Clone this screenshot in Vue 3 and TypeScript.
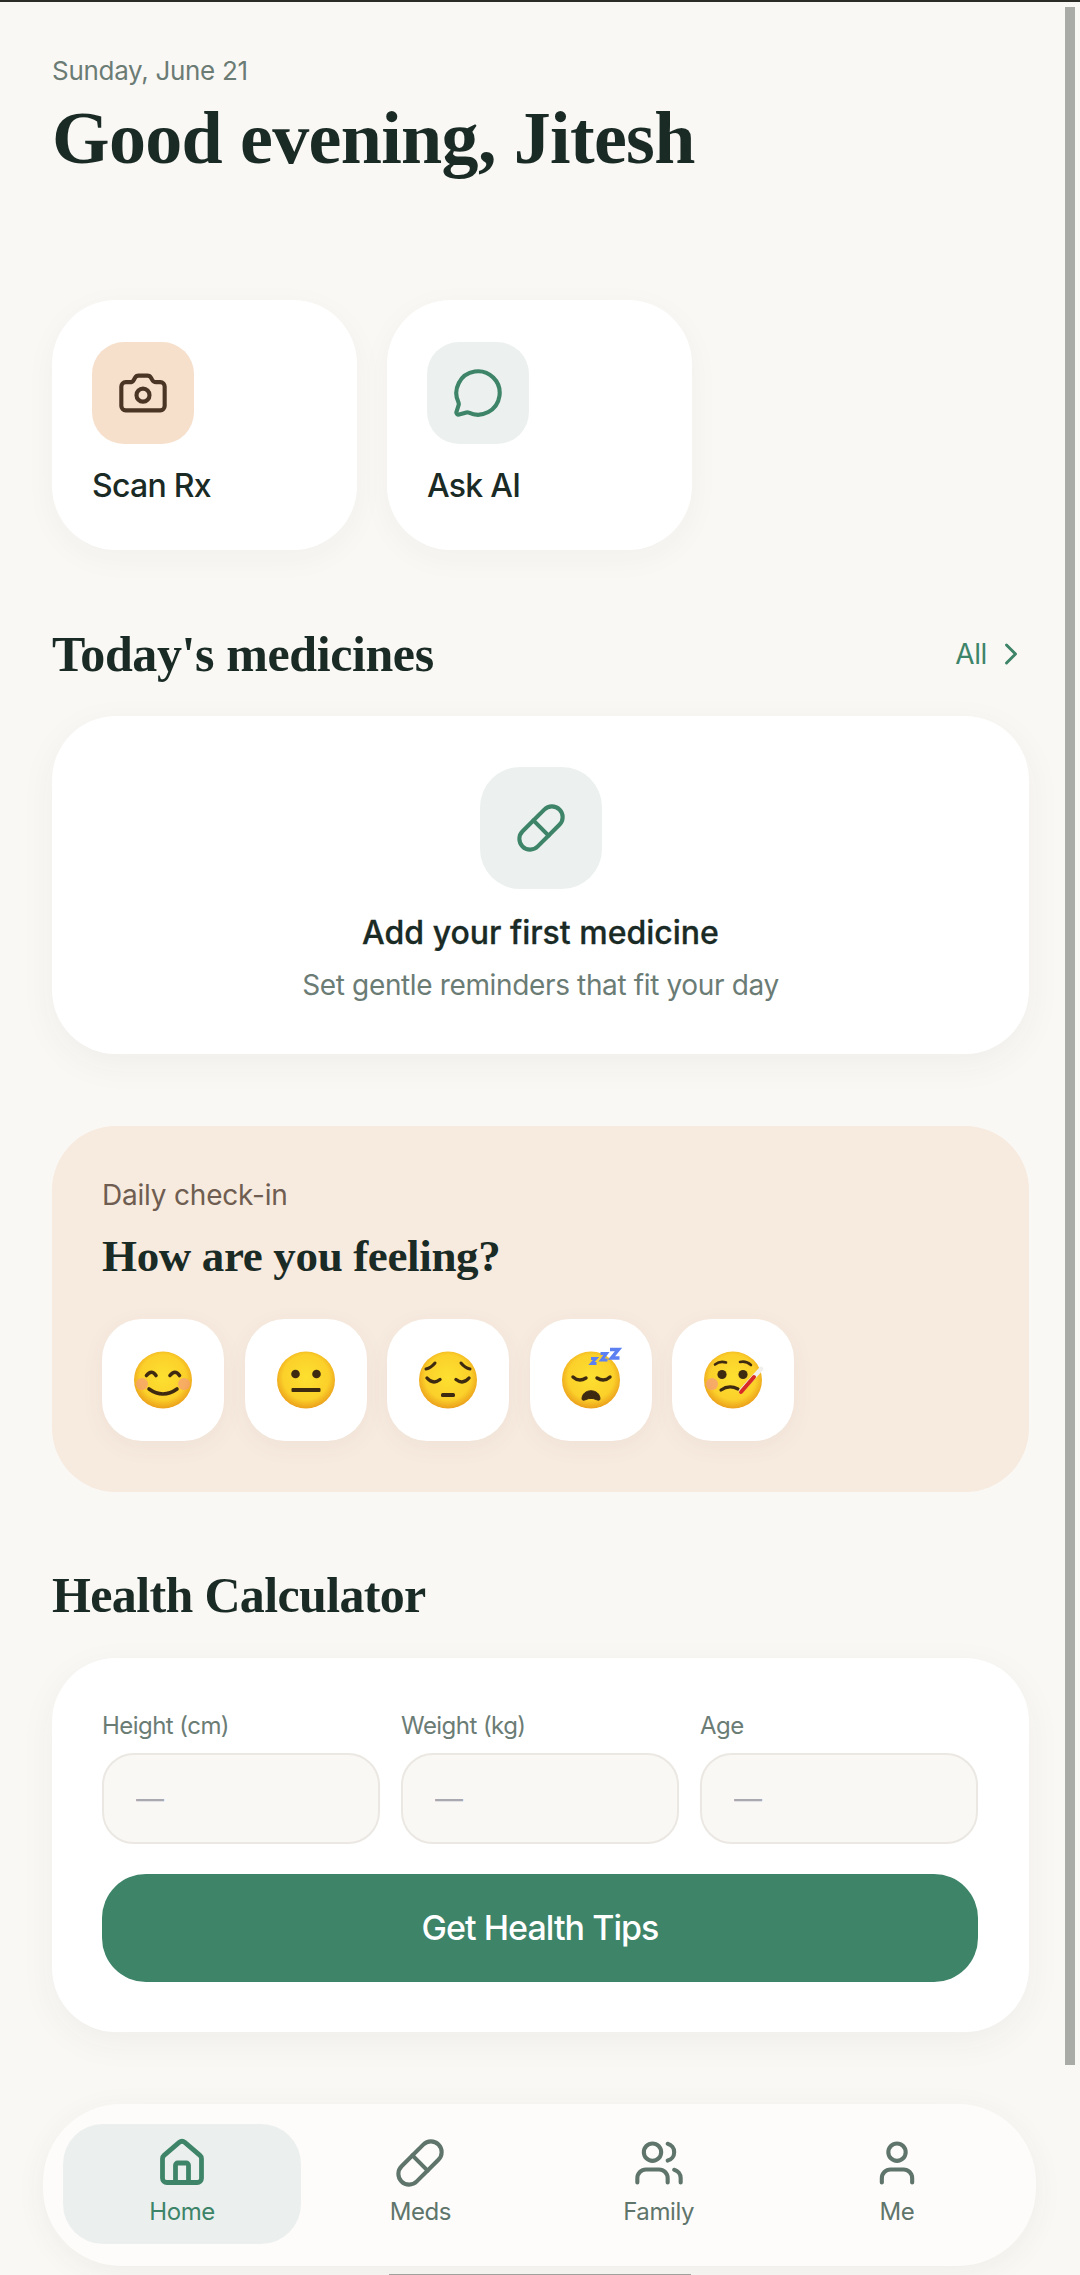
<script setup lang="ts">
const navItems = [
  { label: 'Home', active: true },
  { label: 'Meds', active: false },
  { label: 'Family', active: false },
  { label: 'Me', active: false },
]
const fields = ['Height (cm)', 'Weight (kg)', 'Age']
</script>

<template>
  <div class="app">
    <div class="status-line"></div>
    <main class="page">
      <header class="hero">
        <p class="date">Sunday, June 21</p>
        <h1 class="greeting">Good evening, Jitesh</h1>
      </header>

      <section class="actions">
        <button class="action">
          <span class="tile peach">
            <svg class="icon52" viewBox="0 0 24 24" fill="none" stroke="#4a3424" stroke-width="1.9" stroke-linecap="round" stroke-linejoin="round">
              <path d="M13.997 4a2 2 0 0 1 1.76 1.05l.486.9A2 2 0 0 0 18.003 7H20a2 2 0 0 1 2 2v9a2 2 0 0 1-2 2H4a2 2 0 0 1-2-2V9a2 2 0 0 1 2-2h1.997a2 2 0 0 0 1.759-1.048l.489-.904A2 2 0 0 1 10.004 4z" />
              <circle cx="12" cy="13" r="3" />
            </svg>
          </span>
          <span class="action-label">Scan Rx</span>
        </button>
        <button class="action">
          <span class="tile mint">
            <svg class="icon52" viewBox="0 0 24 24" fill="none" stroke="#3d8469" stroke-width="1.9" stroke-linecap="round" stroke-linejoin="round">
              <path d="M2.992 16.342a2 2 0 0 1 .094 1.167l-1.065 3.29a1 1 0 0 0 1.236 1.168l3.413-.998a2 2 0 0 1 1.099.092 10 10 0 1 0-4.777-4.719" />
            </svg>
          </span>
          <span class="action-label">Ask AI</span>
        </button>
      </section>

      <div class="section-head first-head">
        <h2 class="section-title">Today's medicines</h2>
        <a class="all-link">All
          <svg class="chev" viewBox="0 0 24 24" fill="none" stroke="#3d8469" stroke-width="2" stroke-linecap="round" stroke-linejoin="round"><path d="m9 18 6-6-6-6" /></svg>
        </a>
      </div>

      <section class="card empty">
        <span class="empty-tile">
          <svg class="icon52" viewBox="0 0 24 24" fill="none" stroke="#3d8469" stroke-width="1.9" stroke-linecap="round" stroke-linejoin="round">
            <path d="m10.5 20.5 10-10a4.95 4.95 0 1 0-7-7l-10 10a4.95 4.95 0 1 0 7 7Z" />
            <path d="m8.5 8.5 7 7" />
          </svg>
        </span>
        <h3 class="empty-title">Add your first medicine</h3>
        <p class="empty-sub">Set gentle reminders that fit your day</p>
      </section>

      <section class="checkin">
        <p class="checkin-kicker">Daily check-in</p>
        <h2 class="checkin-title">How are you feeling?</h2>
        <div class="moods">
          <button class="mood" aria-label="Happy">
            <svg class="emoji" viewBox="0 0 60 60">
              <defs>
                <radialGradient id="face" cx="50%" cy="45%" r="55%">
                  <stop offset="0%" stop-color="#fde030" />
                  <stop offset="72%" stop-color="#fbd02a" />
                  <stop offset="100%" stop-color="#eb9f1b" />
                </radialGradient>
              </defs>
              <ellipse cx="30" cy="30" rx="29" ry="28.5" fill="url(#face)" />
              <circle cx="9" cy="34" r="6" fill="#f49a80" opacity=".65" />
              <circle cx="51" cy="34" r="6" fill="#f49a80" opacity=".65" />
              <g fill="none" stroke="#3e2a10" stroke-width="3.6" stroke-linecap="round">
                <path d="M13.5 25.5q5-6.5 9.5 0" />
                <path d="M37 25.5q5-6.5 9.5 0" />
                <path d="M16 39q14 10 28 0" />
              </g>
            </svg>
          </button>
          <button class="mood" aria-label="Neutral">
            <svg class="emoji" viewBox="0 0 60 60">
              <ellipse cx="30" cy="30" rx="29" ry="28.5" fill="url(#face)" />
              <circle cx="19.5" cy="24" r="4.3" fill="#3e2a10" />
              <circle cx="40.5" cy="24" r="4.3" fill="#3e2a10" />
              <rect x="15.5" y="38" width="29" height="4" rx="1" fill="#3e2a10" />
            </svg>
          </button>
          <button class="mood" aria-label="Sad">
            <svg class="emoji" viewBox="0 0 60 60">
              <ellipse cx="30" cy="30" rx="29" ry="28.5" fill="url(#face)" />
              <g fill="none" stroke="#3e2a10" stroke-width="3" stroke-linecap="round">
                <path d="M8 19q5-1 9-6" />
                <path d="M52 19q-5-1-9-6" />
                <path d="M9 28q6 7 13 1.5" stroke-width="3.4" />
                <path d="M38 29.5q7 5.5 13-1.5" stroke-width="3.4" />
              </g>
              <rect x="23" y="43" width="14" height="4" rx="1.6" fill="#3e2a10" />
            </svg>
          </button>
          <button class="mood" aria-label="Sleepy">
            <svg class="emoji" viewBox="0 0 60 60">
              <ellipse cx="30" cy="30" rx="29" ry="28.5" fill="url(#face)" />
              <g fill="none" stroke="#3e2a10" stroke-width="3.4" stroke-linecap="round">
                <path d="M12 27q6 5.5 13 1" />
                <path d="M36 28q7 4.5 13-1" />
              </g>
              <path d="M21 49c0-11 18-11 18 0 0 1.5-2 1.5-4 .5-3-1.5-7-1.5-10 0-2 1-4 1-4-.5Z" fill="#3e2a10" stroke="#3e2a10" stroke-width="1" />
              <g fill="none" stroke="#5c80f2" stroke-linejoin="miter">
                <path d="M30 8.5h5l-4.500 5h5" stroke-width="2.8" />
                <path d="M39.5 3.5h6l-5 6.500h6" stroke-width="3" />
                <path d="M49-.5h8.5l-7 8.500h8" stroke-width="3.5" />
              </g>
            </svg>
          </button>
          <button class="mood" aria-label="Unwell">
            <svg class="emoji" viewBox="0 0 60 60">
              <ellipse cx="30" cy="30" rx="29" ry="28.5" fill="url(#face)" />
              <circle cx="9" cy="34" r="6" fill="#f49a80" opacity=".7" />
              <circle cx="19" cy="24.5" r="4.6" fill="#3e2a10" />
              <circle cx="40" cy="24.5" r="4.6" fill="#3e2a10" />
              <g fill="none" stroke="#3e2a10" stroke-width="2.6" stroke-linecap="round">
                <path d="M12 14.5q5-4 11-2" />
                <path d="M37 12q6-1.5 11 3" />
                <path d="M18 40q8-5.5 17-1" stroke-width="3.2" />
              </g>
              <path d="M38 41 58 19" stroke="#f1efec" stroke-width="4.5" stroke-linecap="round" />
              <path d="M38 42 51 27" stroke="#d92b26" stroke-width="4" stroke-linecap="round" />
            </svg>
          </button>
        </div>
      </section>

      <div class="section-head second-head">
        <h2 class="section-title calc-title">Health Calculator</h2>
      </div>

      <section class="card calc">
        <div class="fields">
          <label v-for="f in fields" :key="f" class="field">
            <span class="field-label">{{ f }}</span>
            <input class="field-input" placeholder="—" />
          </label>
        </div>
        <button class="tips">Get Health Tips</button>
      </section>
    </main>

    <nav class="nav">
      <a v-for="item in navItems" :key="item.label" class="nav-item" :class="{ active: item.active }">
        <svg class="icon52" viewBox="0 0 24 24" fill="none" stroke="currentColor" :stroke-width="item.active ? 2.2 : 1.9" stroke-linecap="round" stroke-linejoin="round">
          <template v-if="item.label === 'Home'">
            <path d="M15 21v-8a1 1 0 0 0-1-1h-4a1 1 0 0 0-1 1v8" />
            <path d="M3 10a2 2 0 0 1 .709-1.528l7-5.999a2 2 0 0 1 2.582 0l7 5.999A2 2 0 0 1 21 10v9a2 2 0 0 1-2 2H5a2 2 0 0 1-2-2z" />
          </template>
          <template v-else-if="item.label === 'Meds'">
            <path d="m10.5 20.5 10-10a4.95 4.95 0 1 0-7-7l-10 10a4.95 4.95 0 1 0 7 7Z" />
            <path d="m8.5 8.5 7 7" />
          </template>
          <template v-else-if="item.label === 'Family'">
            <path d="M16 21v-2a4 4 0 0 0-4-4H6a4 4 0 0 0-4 4v2" />
            <circle cx="9" cy="7" r="4" />
            <path d="M22 21v-2a4 4 0 0 0-3-3.87" />
            <path d="M16 3.13a4 4 0 0 1 0 7.75" />
          </template>
          <template v-else>
            <path d="M19 21v-2a4 4 0 0 0-4-4H9a4 4 0 0 0-4 4v2" />
            <circle cx="12" cy="7" r="4" />
          </template>
        </svg>
        <span class="nav-label">{{ item.label }}</span>
      </a>
    </nav>

    <div class="scrollbar"></div>
    <div class="home-line"></div>
  </div>
</template>

<style>
html, body { margin: 0; background: #faf8f5; }
</style>

<style scoped>
.app {
  position: relative;
  width: 1080px;
  height: 2275px;
  overflow: hidden;
  background: #faf8f5;
  font-family: Inter, "Noto Sans", sans-serif;
  color: #1a2a25;
}
.status-line { height: 2px; background: #2c2c26; }
.page { padding: 0 51px 0 52px; }
p, h1, h2, h3 { margin: 0; }
button { font: inherit; color: inherit; border: 0; cursor: pointer; }

.hero { padding-top: 52px; }
.date { font-size: 26px; line-height: 34px; color: #6b7c75; letter-spacing: -0.3px; }
.greeting {
  margin-top: 12px;
  font-family: "Liberation Serif", serif;
  font-weight: 700;
  font-size: 74px;
  line-height: 76px;
  letter-spacing: -0.65px;
  color: #1a2a25;
}

.actions { display: flex; gap: 30px; margin-top: 124px; }
.action {
  width: 305px;
  height: 250px;
  box-sizing: border-box;
  padding: 42px 40px 0;
  border-radius: 64px;
  background: #fff;
  box-shadow: 0 8px 32px rgba(60, 60, 40, 0.04);
  display: flex;
  flex-direction: column;
  align-items: flex-start;
  text-align: left;
}
.tile {
  width: 102px;
  height: 102px;
  border-radius: 32px;
  display: flex;
  align-items: center;
  justify-content: center;
}
.peach { background: #f6e0cc; }
.mint { background: #ecf1ef; }
.icon52 { width: 52px; height: 52px; display: block; flex: none; }
.action-label {
  margin-top: 22px;
  font-size: 32px;
  line-height: 40px;
  font-weight: 500;
  letter-spacing: -0.75px;
}

.section-head {
  display: flex;
  align-items: center;
  justify-content: space-between;
  height: 60px;
  margin-bottom: 32px;
}
.first-head { margin-top: 74px; }
.second-head { margin-top: 73px; margin-bottom: 33px; }
.section-title {
  font-family: "Liberation Serif", serif;
  font-weight: 700;
  font-size: 50px;
  line-height: 60px;
  letter-spacing: -0.4px;
}
.calc-title { letter-spacing: -0.65px; }
.all-link {
  display: flex;
  align-items: center;
  gap: 6px;
  padding-right: 0;
  font-size: 28px;
  color: #3d8469;
  letter-spacing: -0.4px;
}
.chev { width: 36px; height: 36px; }

.card {
  background: #fff;
  border-radius: 64px;
  box-shadow: 0 10px 36px rgba(60, 60, 40, 0.05);
}
.empty {
  box-sizing: border-box;
  height: 338px;
  padding-top: 51px;
  display: flex;
  flex-direction: column;
  align-items: center;
}
.empty-tile {
  width: 122px;
  height: 122px;
  border-radius: 40px;
  background: #ecf1ef;
  display: flex;
  align-items: center;
  justify-content: center;
}
.empty-title {
  margin-top: 24px;
  font-size: 32px;
  line-height: 40px;
  font-weight: 500;
  letter-spacing: 0;
  -webkit-text-stroke: 0.3px #1a2a25;
}
.empty-sub {
  margin-top: 14px;
  font-size: 28px;
  line-height: 36px;
  color: #6b7c75;
  letter-spacing: -0.36px;
}

.checkin {
  box-sizing: border-box;
  margin-top: 72px;
  height: 366px;
  padding: 52px 50px 0;
  border-radius: 64px;
  background: #f7eadf;
}
.checkin-kicker { font-size: 28px; line-height: 34px; color: #6e5d50; letter-spacing: -0.2px; }
.checkin-title {
  margin-top: 19px;
  font-family: "Liberation Serif", serif;
  font-weight: 700;
  font-size: 45px;
  line-height: 50px;
  letter-spacing: -0.35px;
}
.moods { display: flex; gap: 20.5px; margin-top: 38px; }
.mood {
  width: 122px;
  height: 122px;
  border-radius: 40px;
  background: #fff;
  box-shadow: 0 6px 24px rgba(90, 70, 40, 0.05);
  display: flex;
  align-items: center;
  justify-content: center;
  padding: 0;
}
.emoji { width: 60px; height: 60px; display: block; overflow: visible; }

.calc {
  box-sizing: border-box;
  height: 374px;
  padding: 52px 51px 0 50px;
}
.fields { display: grid; grid-template-columns: repeat(3, 1fr); gap: 21px; }
.field { display: flex; flex-direction: column; min-width: 0; }
.field-label { font-size: 24px; line-height: 32px; color: #6b7c75; letter-spacing: -0.55px; }
.field-input {
  box-sizing: border-box;
  margin-top: 11px;
  width: 100%;
  height: 91px;
  padding: 0 32px;
  border: 2px solid #ebe8e3;
  border-radius: 32px;
  background: #faf8f5;
  font: inherit;
  font-size: 28px;
  outline: none;
}
.field-input::placeholder { color: #a9a9b2; opacity: 1; }
.tips {
  display: block;
  width: 100%;
  height: 108px;
  margin-top: 30px;
  padding-bottom: 2px;
  border-radius: 44px;
  background: #3d8469;
  color: #fff;
  font-size: 34px;
  font-weight: 500;
  letter-spacing: -0.95px;
}

.nav {
  position: absolute;
  left: 43px;
  top: 2104px;
  width: 993px;
  height: 162px;
  box-sizing: border-box;
  padding: 20px;
  display: flex;
  border-radius: 78px;
  background: #fdfcfa;
  box-shadow: 0 6px 30px rgba(60, 60, 40, 0.06);
}
.nav-item {
  flex: 1;
  height: 120px;
  box-sizing: border-box;
  padding-top: 13px;
  border-radius: 40px;
  display: flex;
  flex-direction: column;
  align-items: center;
  color: #5f756c;
}
.nav-item.active { background: #ebf0ee; color: #3d8469; }
.nav-label { margin-top: 8px; font-size: 24px; line-height: 30px; letter-spacing: -0.4px; }

.scrollbar {
  position: absolute;
  left: 1065px;
  top: 7px;
  width: 10px;
  height: 2058px;
  background: #a9aba7;
}
.home-line {
  position: absolute;
  left: 389px;
  top: 2274px;
  width: 302px;
  height: 1px;
  background: #a0a09c;
}
</style>
